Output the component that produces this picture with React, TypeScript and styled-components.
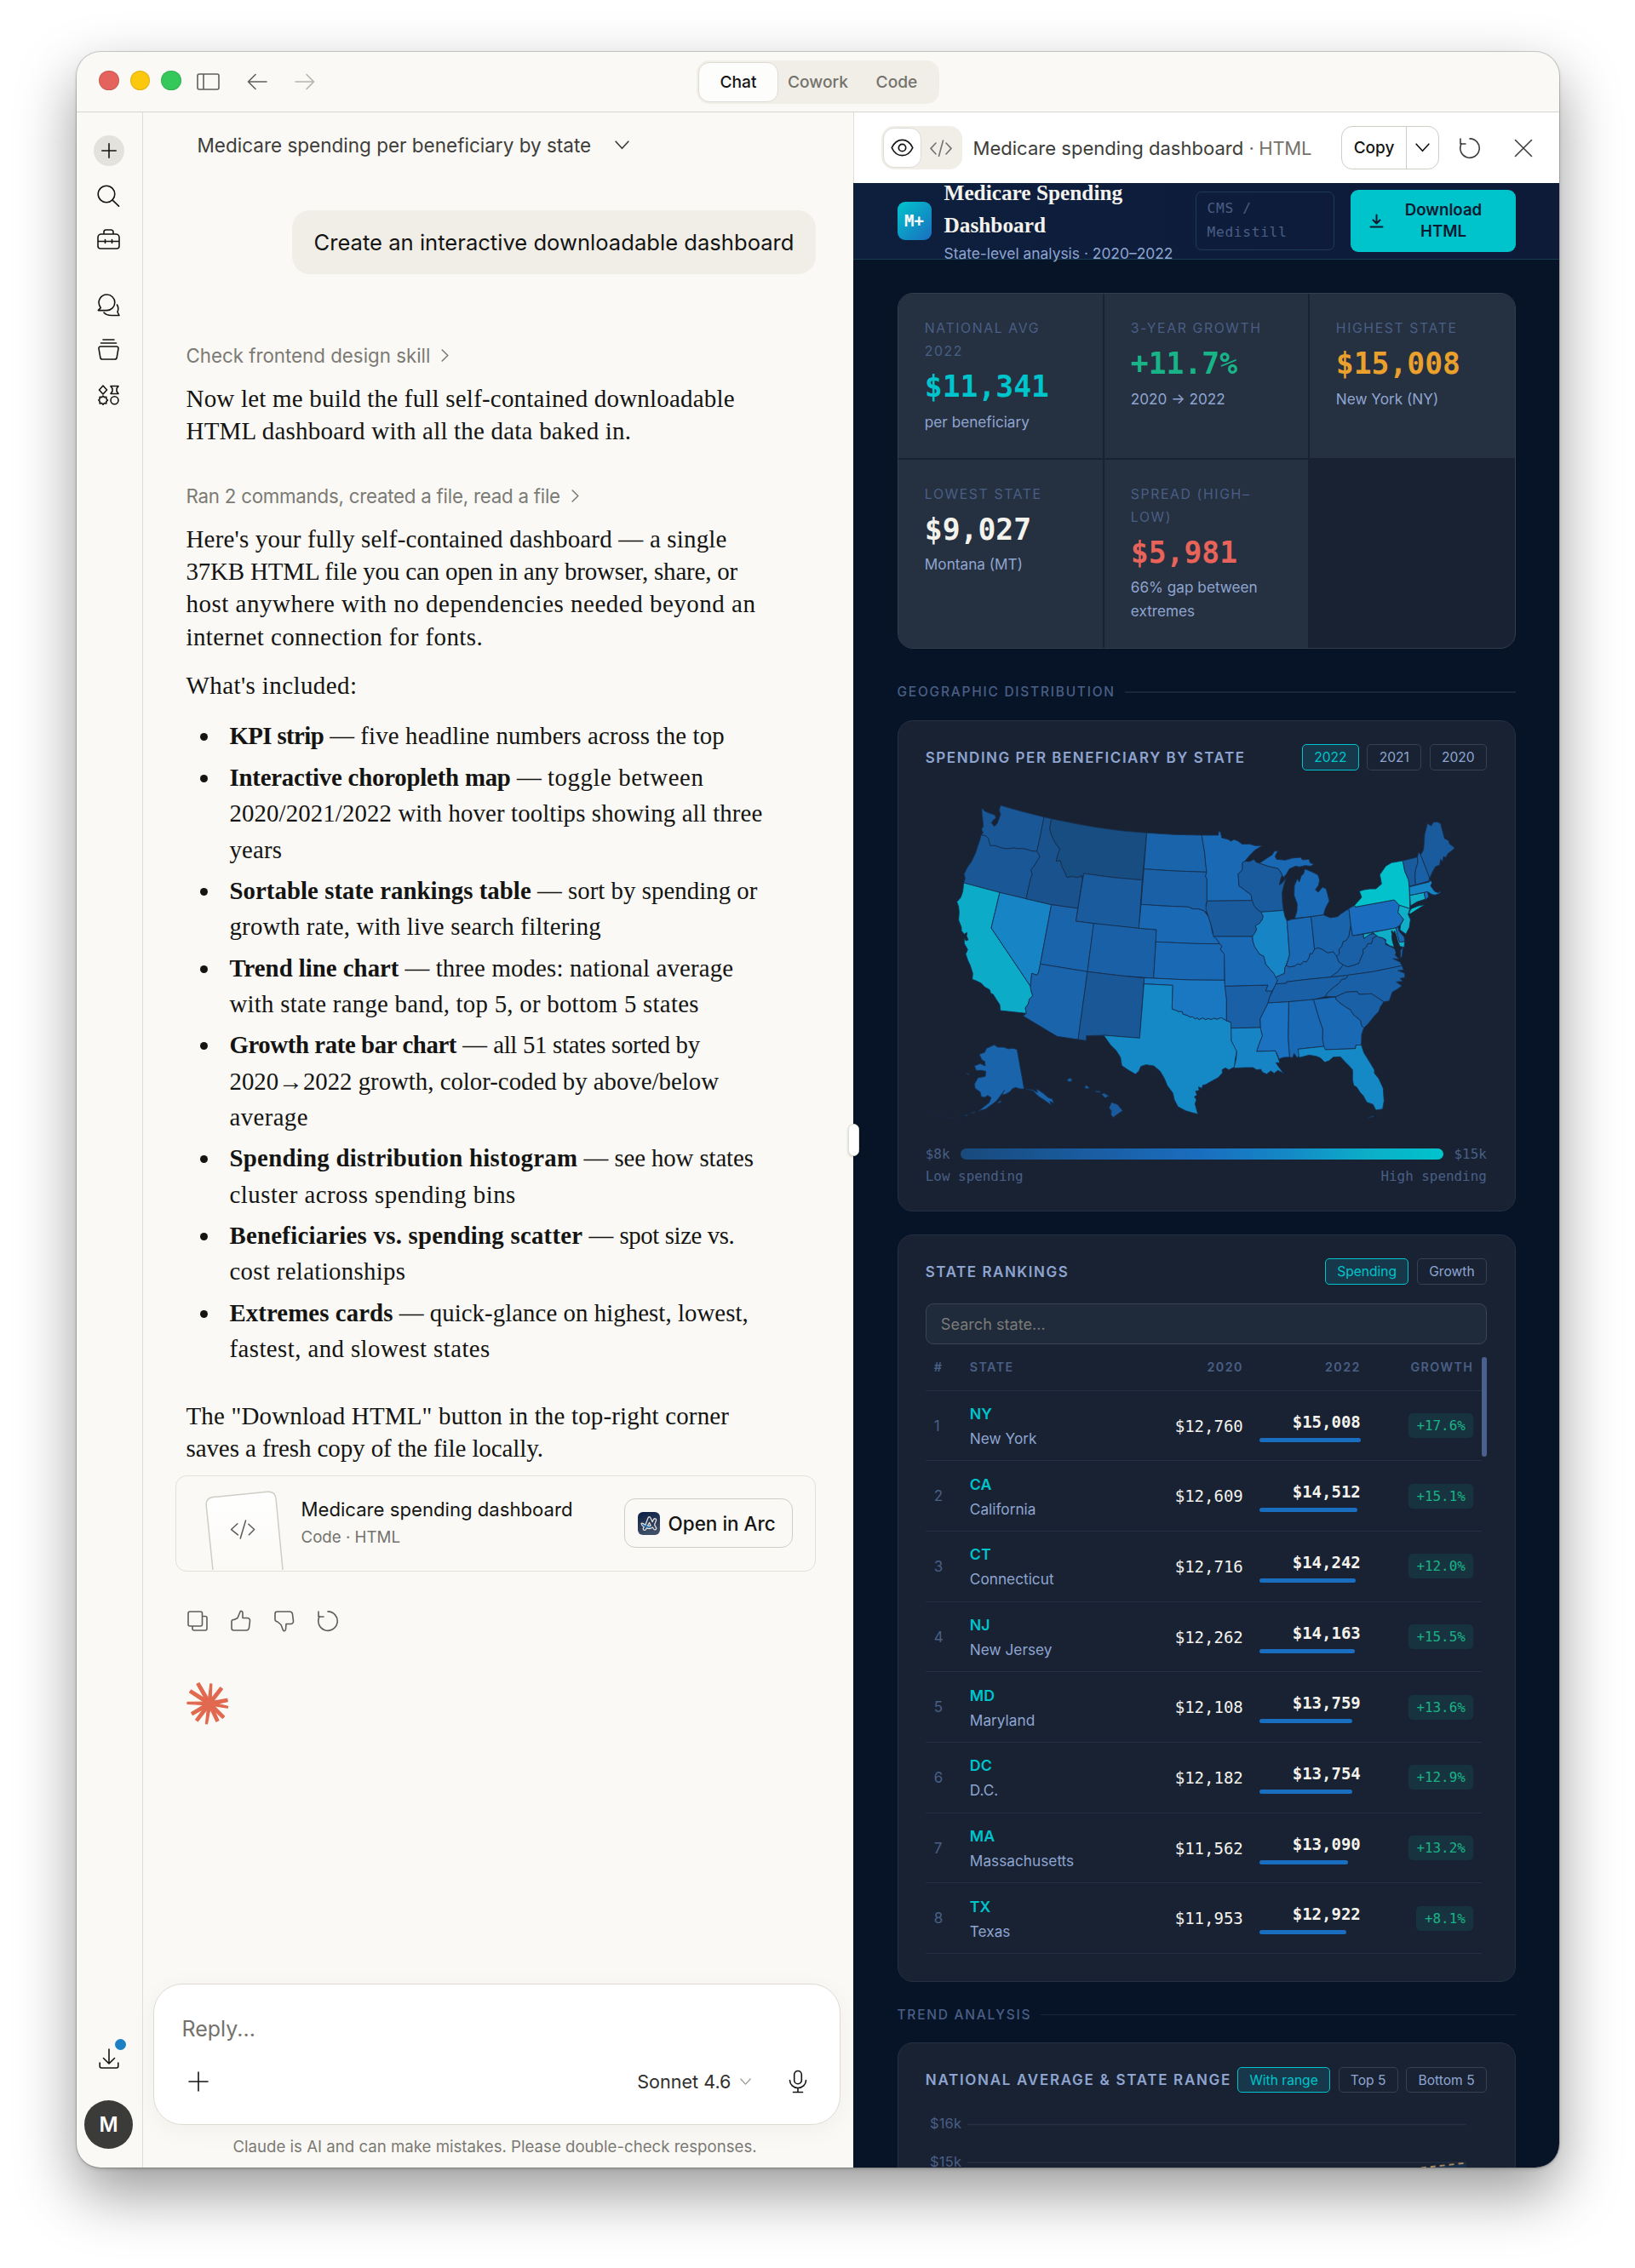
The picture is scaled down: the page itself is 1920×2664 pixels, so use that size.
import React from 'react';
import styled, { createGlobalStyle, css } from 'styled-components';

const SANS = `Inter, 'Liberation Sans', sans-serif`;
const SERIF = `'Liberation Serif', serif`;
const MONO = `'DejaVu Sans Mono', 'Liberation Mono', monospace`;

const Global = createGlobalStyle`
  *, *::before, *::after { box-sizing: border-box; }
  html, body { margin: 0; background: #fff; }
  body { font-family: ${SANS}; color: #141413; overflow: hidden; }
  svg { display: block; flex: none; }
`;

const Page = styled.div`
  width: 1920px;
  height: 2664px;
  padding: 61px 0 0 90px;
  overflow: hidden;
`;

const Window = styled.div`
  width: 1741px;
  height: 2485px;
  border-radius: 28px;
  background: #faf9f5;
  box-shadow: 0 0 0 1px rgba(0, 0, 0, 0.16), 0 2px 4px rgba(0, 0, 0, 0.15), 0 30px 70px rgba(0, 0, 0, 0.4);
  overflow: hidden;
  display: flex;
  flex-direction: column;
  white-space: nowrap;
`;

/* ---------- title bar ---------- */

const TitleBar = styled.div`
  height: 71px;
  flex: none;
  border-bottom: 1.5px solid #d6d5d0;
  display: grid;
  grid-template-columns: 728px 285px 1fr;
  align-items: center;
`;
const Controls = styled.div`
  display: flex;
  align-items: center;
  padding-left: 26px;
`;
const Light = styled.span<{ $c: string }>`
  width: 23.5px;
  height: 23.5px;
  margin: -3px 13.2px 0 0;
  border-radius: 50%;
  background: ${p => p.$c};
  border: 1px solid rgba(0, 0, 0, 0.1);
`;
const NavIcons = styled.div`
  display: flex;
  align-items: center;
  gap: 32px;
  margin-left: 5px;
`;
const Segments = styled.div`
  height: 51px;
  border-radius: 15px;
  background: #f0eee7;
  padding: 2px;
  display: flex;
  font-size: 19.2px;
  font-weight: 450;
  color: #73726c;
`;
const Segment = styled.span<{ $on?: boolean; $w: number }>`
  width: ${p => p.$w}px;
  display: flex;
  align-items: center;
  justify-content: center;
  border-radius: 13px;
  ${p => p.$on && css`
    background: #fdfdfb;
    color: #141413;
    border: 1.5px solid #dddbd5;
  `}
`;

/* ---------- body ---------- */

const Body = styled.div`
  flex: 1;
  min-height: 0;
  display: grid;
  grid-template-columns: 78px 834px 1fr;
  grid-template-rows: minmax(0, 1fr);
`;

const Rail = styled.nav`
  border-right: 1.5px solid #dfded9;
  display: flex;
  flex-direction: column;
  align-items: center;
  padding: 27px 2px 22px 0;
`;
const NewChat = styled.span`
  width: 36px;
  height: 36px;
  border-radius: 50%;
  background: #e3e2dd;
  display: grid;
  place-items: center;
`;
const RailIcon = styled.span<{ $mt: number }>`
  height: 26px;
  margin-top: ${p => p.$mt}px;
  display: grid;
  place-items: center;
`;
const DownloadIcon = styled(RailIcon)`
  position: relative;
  &::after {
    content: '';
    position: absolute;
    top: -10px;
    right: -8px;
    width: 13px;
    height: 13px;
    border-radius: 50%;
    background: #1c80c4;
  }
`;
const Avatar = styled.span`
  width: 57px;
  height: 57px;
  margin-top: 36px;
  border-radius: 50%;
  background: #3b3b3a;
  color: #fff;
  display: grid;
  place-items: center;
  font-size: 24px;
  font-weight: 600;
`;
const Grow = styled.div`
  flex: 1;
`;

/* ---------- chat ---------- */

const Chat = styled.main`
  display: flex;
  flex-direction: column;
  min-height: 0;
`;
const ChatTitle = styled.header`
  height: 77px;
  padding-left: 63.5px;
  display: flex;
  align-items: center;
  gap: 28px;
  font-size: 22.5px;
  color: #3d3d3a;
`;
const Bubble = styled.div`
  align-self: flex-end;
  width: 615px;
  height: 75px;
  margin: 38px 44.5px 76px 0;
  padding-left: 26px;
  display: flex;
  align-items: center;
  border-radius: 21px;
  background: #f0eee7;
  font-size: 25.6px;
  line-height: 38px;
`;
const Thread = styled.div`
  padding-left: 50.5px;
  display: flex;
  flex-direction: column;
`;
const Step = styled.div<{ $mt?: number; $ls?: number }>`
  margin-top: ${p => p.$mt ?? 0}px;
  height: 38px;
  display: flex;
  align-items: center;
  gap: 13px;
  font-size: 22.3px;
  letter-spacing: ${p => p.$ls ?? 0}px;
  color: #7b7a74;
`;
const Para = styled.p<{ $mt: number }>`
  margin: ${p => p.$mt}px 0 0;
  font-family: ${SERIF};
  font-size: 29px;
  line-height: 38.2px;
`;
const List = styled.ul`
  list-style: none;
  margin: 19px 0 0;
  padding: 0;
  display: flex;
  flex-direction: column;
  gap: 5.9px;
  font-family: ${SERIF};
  font-size: 28.8px;
  line-height: 42.4px;
`;
const Item = styled.li`
  display: grid;
  grid-template-columns: 51px 1fr;
  &::before {
    content: '';
    width: 9px;
    height: 9px;
    margin: 18px 0 0 16px;
    border-radius: 50%;
    background: #141413;
  }
`;
const Track = styled.span<{ $ls: number }>`
  letter-spacing: ${p => p.$ls}px;
`;
const Name = styled.b<{ $ls: number }>`
  letter-spacing: ${p => p.$ls}px;
`;
const FileCard = styled.div`
  width: 752px;
  height: 113px;
  margin: 13px 0 0 -13px;
  padding: 0 26px 0 34px;
  border: 1.5px solid #e2e0d9;
  border-radius: 13px;
  display: grid;
  grid-template-columns: 113px 1fr auto;
  align-items: center;
  overflow: hidden;
`;
const FileText = styled.div`
  display: flex;
  flex-direction: column;
`;
const FileName = styled.span`
  font-size: 22.15px;
  line-height: 34px;
`;
const FileKind = styled.span`
  font-size: 18.7px;
  line-height: 32px;
  color: #73726c;
`;
const OpenButton = styled.button`
  width: 198px;
  height: 58px;
  border: 1.5px solid #cfcdc6;
  border-radius: 13px;
  background: none;
  padding: 0 0 0 15px;
  display: flex;
  align-items: center;
  gap: 10px;
  font: 500 22.5px ${SANS};
  color: #141413;
`;
const Actions = styled.div`
  display: flex;
  gap: 25px;
  margin: 45px 0 0 0;
`;
const Burst = styled.div`
  margin: 57px 0 0 -2px;
`;
const Composer = styled.div`
  width: 807px;
  height: 166px;
  flex: none;
  margin-left: 11.5px;
  border: 1.5px solid #dddbd4;
  border-radius: 34px;
  background: #fff;
  box-shadow: 0 6px 30px rgba(0, 0, 0, 0.045);
  padding: 34px 38px 35px 33px;
  display: flex;
  flex-direction: column;
  justify-content: space-between;
`;
const Placeholder = styled.div`
  font-size: 25px;
  line-height: 36px;
  color: #73726c;
`;
const ComposerRow = styled.div`
  height: 30px;
  display: flex;
  align-items: center;
  padding-left: 7.5px;
`;
const Model = styled.span`
  margin-left: auto;
  margin-right: 44px;
  display: flex;
  align-items: center;
  gap: 10px;
  font-size: 21.6px;
  color: #2f2f2d;
`;
const Disclaimer = styled.div`
  height: 50px;
  flex: none;
  line-height: 50px;
  text-align: center;
  padding-right: 8px;
  font-size: 18.65px;
  color: #7b7a74;
`;

/* ---------- artifact pane ---------- */

const Pane = styled.section`
  position: relative;
  min-width: 0;
  background: #071427;
  display: flex;
  flex-direction: column;
`;
const Handle = styled.span`
  position: absolute;
  left: -6px;
  top: 1188px;
  width: 13px;
  height: 38px;
  border-radius: 7px;
  background: #fff;
  border: 1px solid #dedcd5;
  box-shadow: 0 1px 3px rgba(0, 0, 0, 0.2);
`;
const PaneBar = styled.header`
  height: 83px;
  flex: none;
  background: #fff;
  display: flex;
  align-items: center;
  padding: 0 31px 0 31.5px;
  border-left: 1px solid #dfded9;
`;
const ViewToggle = styled.div`
  width: 95px;
  height: 51px;
  border-radius: 15px;
  background: #f0eee7;
  padding: 2px;
  display: flex;
`;
const ToggleSide = styled.span<{ $on?: boolean }>`
  width: 46px;
  display: grid;
  place-items: center;
  border-radius: 13px;
  ${p => p.$on && css`
    background: #fff;
    border: 1.5px solid #dddbd5;
  `}
`;
const PaneTitle = styled.div`
  margin-left: 13px;
  font-size: 22.05px;
  color: #3d3d3a;
  span { color: #73726c; letter-spacing: -0.3px; }
`;
const CopyGroup = styled.div`
  width: 115px;
  height: 51px;
  margin-left: auto;
  border: 1.5px solid #cfcdc6;
  border-radius: 13px;
  display: grid;
  grid-template-columns: 75px 1fr;
  font-size: 19px;
  font-weight: 500;
`;
const CopyPart = styled.span<{ $line?: boolean }>`
  display: grid;
  place-items: center;
  ${p => p.$line && css`border-left: 1.5px solid #cfcdc6;`}
`;
const PaneIcon = styled.span<{ $ml: number }>`
  margin-left: ${p => p.$ml}px;
`;

/* ---------- dashboard ---------- */

const DashHeader = styled.header`
  height: 89.5px;
  flex: none;
  padding: 0 51px 0 51.5px;
  background: linear-gradient(90deg, #0e1f3e, #0d1a38);
  border-bottom: 1.5px solid #1b3b52;
  display: flex;
  align-items: center;
`;
const Mark = styled.span`
  width: 40px;
  height: 45px;
  border-radius: 9px;
  background: linear-gradient(135deg, #00c4cc, #1a6ebf);
  display: grid;
  place-items: center;
  font: 700 19px ${MONO};
  color: #fff;
`;
const DashTitle = styled.div`
  margin-left: 15px;
  font: 700 25.3px/38.6px ${SERIF};
  color: #f4f2ec;
`;
const DashSub = styled.div`
  font: 400 17.4px/28px ${SANS};
  color: #8fa5d0;
`;
const Source = styled.div`
  width: 163px;
  height: 69px;
  margin-left: auto;
  padding: 5px 0 0 13px;
  border: 1.5px solid #1d3c54;
  border-radius: 7px;
  font: 400 16.2px/28px ${MONO};
  letter-spacing: 0.7px;
  color: #4a5f85;
`;
const DownloadButton = styled.button`
  width: 194px;
  height: 73px;
  margin-left: 19.5px;
  border: 0;
  border-radius: 9px;
  background: #00c4cc;
  color: #0b1a30;
  font: 600 18.7px/25.5px ${SANS};
  display: grid;
  grid-template-columns: 18px 1fr;
  align-items: center;
  padding: 0 16px 0 22px;
`;
const DashBody = styled.div`
  flex: 1;
  min-height: 0;
  padding: 39.5px 51px 0 51.5px;
  overflow: hidden;
`;
const Kpis = styled.div`
  height: 417.5px;
  border: 1.5px solid #333d4c;
  border-radius: 18px;
  overflow: hidden;
  background: #182233;
  display: grid;
  grid-template-columns: 240.5px 239.5px 1fr;
  grid-template-rows: 193px 1fr;
  gap: 1.5px;
`;
const Kpi = styled.div`
  background: #253040;
  padding: 27px 0 0 31.3px;
`;
const KpiLabel = styled.div`
  font-size: 15.8px;
  line-height: 27px;
  letter-spacing: 1.6px;
  color: #4a5f85;
`;
const KpiValue = styled.div<{ $c: string }>`
  font: 700 34.7px/42px ${MONO};
  margin-top: 7px;
  color: ${p => p.$c};
`;
const KpiNote = styled.div`
  font-size: 17.2px;
  line-height: 28px;
  margin-top: 6.5px;
  color: #8fa5d0;
`;
const Section = styled.div<{ $h: number; $c: number }>`
  height: ${p => p.$h}px;
  padding-top: ${p => p.$c}px;
  display: flex;
  align-items: flex-start;
  gap: 11px;
  font-size: 15.5px;
  line-height: 20px;
  font-weight: 500;
  letter-spacing: 1.75px;
  color: #4a5f85;
  &::after {
    content: '';
    flex: 1;
    height: 1.5px;
    margin-top: 9px;
    background: #18263a;
  }
`;
const Card = styled.div<{ $h: number }>`
  height: ${p => p.$h}px;
  padding: 27.9px 33.2px 0 32.3px;
  border: 1.5px solid #253042;
  border-radius: 18px;
  background: #182233;
`;
const CardHead = styled.div`
  height: 30.5px;
  display: flex;
  align-items: center;
  justify-content: space-between;
`;
const CardTitle = styled.div<{ $ls?: number }>`
  font-size: 17px;
  font-weight: 600;
  letter-spacing: ${p => p.$ls ?? 1.52}px;
  color: #8fa5d0;
`;
const Chips = styled.div`
  display: flex;
  gap: 9.7px;
`;
const Chip = styled.span<{ $on?: boolean }>`
  height: 30.5px;
  padding: 0 13.2px;
  display: flex;
  align-items: center;
  border: 1.5px solid #37404f;
  border-radius: 5px;
  font-size: 15.6px;
  color: #8fa5d0;
  ${p => p.$on && css`
    color: #00c4cc;
    border-color: #00c4cc;
    background: #16384a;
  `}
`;
const MapBox = styled.div`
  margin: 25.5px 0 22px -0.5px;
`;
const Legend = styled.div`
  height: 26px;
  display: flex;
  align-items: center;
  justify-content: space-between;
  gap: 12.5px;
  font: 400 15.9px ${MONO};
  color: #4a5f85;
`;
const LegendBar = styled.div`
  flex: 1;
  height: 13px;
  border-radius: 7px;
  background: linear-gradient(90deg, #184a7c, #1a5fa6 30%, #1a6ebf 50%, #1489c6 68%, #0cadc8 84%, #00c4cc);
`;
const Gap = styled.div<{ $h: number }>`
  height: ${p => p.$h}px;
`;
const Search = styled.div`
  height: 47.5px;
  margin-top: 22.5px;
  padding-left: 17px;
  border: 1.5px solid #3a4551;
  border-radius: 9px;
  background: #1f2a3a;
  display: flex;
  align-items: center;
  font-size: 18.1px;
  color: #7b7b78;
`;
const TableScroll = styled.div`
  margin-top: 15.5px;
  display: grid;
  grid-template-columns: 653.5px 6px;
`;
const Thumb = styled.div`
  height: 117px;
  border-radius: 3px;
  background: #4a6190;
`;
const rowGrid = css`
  display: grid;
  grid-template-columns: 42px 201px 120px 138px 132.5px;
  padding-left: 10px;
  border-bottom: 1.5px solid #253042;
`;
const HeadRow = styled.div`
  ${rowGrid}
  height: 39.3px;
  font-size: 14.3px;
  line-height: 24.6px;
  font-weight: 600;
  letter-spacing: 1.4px;
  color: #4a5f85;
`;
const Right = styled.span`
  text-align: right;
`;
const Row = styled.div`
  ${rowGrid}
  height: 82.68px;
  align-items: center;
`;
const Rank = styled.span`
  font-size: 17px;
  color: #4a5f85;
`;
const StateCode = styled.div`
  font-size: 17.8px;
  line-height: 29px;
  padding-top: 1px;
  font-weight: 600;
  color: #00c4cc;
`;
const StateName = styled.div`
  font-size: 17.25px;
  line-height: 29px;
  color: #8fa5d0;
`;
const Amount = styled.div<{ $bold?: boolean }>`
  text-align: right;
  font: ${p => (p.$bold ? 700 : 400)} 19px/28px ${MONO};
  color: #f4f2ec;
`;
const BarCell = styled.div`
  padding-left: 19px;
`;
const Bar = styled.div`
  height: 5px;
  margin-top: 5px;
  border-radius: 3px;
  background: #1a6ebf;
`;
const Badge = styled.span`
  justify-self: end;
  height: 29px;
  padding: 0 9.5px;
  border-radius: 5px;
  background: #17333f;
  color: #19b388;
  font: 400 15.9px/29px ${MONO};
`;
const ChartBox = styled.div`
  margin-top: 21.5px;
`;

/* ---------- icons ---------- */

type IconProps = { w: number; h: number; vb?: string; c?: string; s?: number; children: React.ReactNode };
const Icon = ({ w, h, vb, c = '#141413', s = 1.6, children }: IconProps) => (
  <svg width={w} height={h} viewBox={vb ?? `0 0 ${w} ${h}`} fill="none" stroke={c} strokeWidth={s} strokeLinecap="round" strokeLinejoin="round">
    {children}
  </svg>
);
const Chevron = ({ dir, c, w }: { dir: 'down' | 'right'; c: string; w: number }) =>
  dir === 'down' ? (
    <Icon w={w} h={w * 0.62} vb="0 0 16 10" c={c}><path d="M1 1.2 8 8.8 15 1.2" /></Icon>
  ) : (
    <Icon w={9} h={15} c={c}><path d="M1.2 1 7.8 7.5 1.2 14" /></Icon>
  );
const Retry = ({ c }: { c: string }) => (
  <Icon w={26} h={26} c={c}>
    <path d="M2 2v6h6M3.200 7.700A11.200 11.200 0 1 0 13 1.900" />
  </Icon>
);
const CodeGlyph = ({ w, h, c }: { w: number; h: number; c: string }) => (
  <Icon w={w} h={h} vb="0 0 28 20" c={c}>
    <path d="M8 4 2 10.4 8 17M20 4l6 6.4L20 17M16.5 1 11.5 19.5" />
  </Icon>
);
const Paper = () => (
  <svg width="92" height="110" viewBox="0 0 92 110" fill="none">
    <defs>
      <linearGradient id="paper" x1="0" y1="0" x2="0" y2="1">
        <stop offset="0" stopColor="#fff" />
        <stop offset="1" stopColor="#faf9f5" />
      </linearGradient>
    </defs>
    <path d="M10 120 1.2 34Q.5 26 9 24.600L73 18.300Q82 17.500 83 26L92 120" fill="url(#paper)" stroke="#cfcdc6" strokeWidth="1.500" />
    <g transform="translate(30 51.500) rotate(2)" stroke="#5f5e5a" strokeWidth="1.600" strokeLinecap="round" strokeLinejoin="round">
      <path d="M8 4 1 11l8 6M21 4l7 6-6 6.500M17.500 0 12 21" />
    </g>
  </svg>
);
const ArcLogo = () => (
  <svg width="26" height="27" viewBox="0 0 26 27" fill="none">
    <defs>
      <linearGradient id="arc" x1="0" y1="0" x2="0.3" y2="1">
        <stop offset="0" stopColor="#0b1d44" />
        <stop offset="1" stopColor="#3d4e66" />
      </linearGradient>
    </defs>
    <rect width="26" height="27" rx="6" fill="url(#arc)" />
    <path d="M5 15.500c3-2 6 3 10 2.500" stroke="#1d6fb8" strokeWidth="3" />
    <path d="M4 13.500c2-1.500 3 1.500 5 1.500l3-8c.6-1.700 2.300-1.700 3 0l2.200 4.600 1.400-3c1-1.600 3.400-.8 3 1.200l-2 5.200 2 3.600c.6 2-2 3-3 1.400l-1.200-2c-2.200 1.700-5 1.700-7 .8l-1 1.800c-1.200 1.600-3.600.6-3-1.400l.8-1.600c-1.400-.8-3-3-3.200-4.100Zm7.500 2.500c1.500.7 2.600.5 3.700-.1l-1.600-3.500Z" stroke="#e3ddd6" strokeWidth="1.300" strokeLinejoin="round" />
  </svg>
);

const SPOKES = [
  [-13.5, -23.5], [1.8, -23], [14, -18], [21, -4], [21.5, 4.2], [16.400, 16.200], [9.400, 20.500], [-3.500, 23.700],
  [-15, 19.800], [-20.500, 12], [-26, -0.7], [-22.500, -14.500],
];
const Spark = () => (
  <svg width="56" height="56" viewBox="-29 -27 56 56">
    {SPOKES.map(([x, y], i) => {
      const l = Math.hypot(x, y);
      const nx = -y / l;
      const ny = x / l;
      const t = i % 3 === 1 ? 1 : 1.7;
      return (
        <path
          key={i}
          d={`M${nx * 2} ${ny * 2}L${x + nx * t} ${y + ny * t}L${x - nx * t} ${y - ny * t}L${-nx * 2} ${-ny * 2}Z`}
          fill="#e1694f"
          stroke="#e1694f"
          strokeWidth="1.200"
          strokeLinejoin="round"
        />
      );
    })}
    <circle r="5.500" fill="#e1694f" />
  </svg>
);

/* ---------- map ---------- */

const C = {
  ny: '#03c2cb', ca: '#0cacc8', hi: '#0fafc8', tx: '#1489c5', nv: '#1784c5', ok: '#1a78c3', ms: '#1a72c1', pa: '#1a6dbe',
  mn: '#1a69b5', oh: '#1a64ac', va: '#1a60a6', wi: '#1a5b9e', wa: '#195796', id: '#19528d', mt: '#184d82',
};
const WEST: [string, string][] = [
  [C.wa, '252,57 262,68 280,76 298,82 302,92 292,100 286,110 296,122 306,112 312,96 318,80 313,64 318,48 395,70 471,89 459,150 446,210 425,208 410,203 395,200 380,201 365,198 340,201 318,197 300,190 282,190 278,178 274,162 262,154 249,153 256,145 251,132 257,122 255,100 252,75'],
  [C.wa, '249,153 262,154 274,162 278,178 282,190 300,190 318,197 340,201 365,198 380,201 395,200 410,203 425,208 446,210 457,228 446,245 436,262 425,275 430,292 424,305 408,377 315,355 188,321 193,305 189,290 200,268 216,245 230,215 238,190 245,170'],
  [C.ca, '188,321 315,355 285,480 423,685 425,700 431,719 420,730 415,748 405,762 409,781 317,771 315,750 303,732 292,714 283,710 280,698 262,688 250,675 232,666 218,661 220,640 211,612 203,595 195,572 202,556 190,535 190,515 196,525 204,522 198,508 200,496 190,502 180,490 180,478 170,452 172,425 170,405 164,388 178,372 185,350'],
  [C.nv, '315,355 408,377 497,398 458,607 452,636 446,646 428,640 423,685 285,480'],
  [C.id, '471,89 497,95 491,130 497,152 510,180 527,202 520,220 514,245 528,242 535,265 545,285 552,302 570,298 590,302 603,296 606,310 590,411 497,398 408,377 424,305 430,292 425,275 436,262 446,245 457,228 446,210 459,150'],
  [C.mt, '497,95 580,112 660,126 740,137 833,145 817,311 714,302 611,288 606,303 603,296 590,302 570,298 552,302 545,285 535,265 528,242 514,245 520,220 527,202 510,180 497,152 491,130'],
  [C.wi, '611,288 714,302 817,311 805,481 694,470 583,456'],
  [C.oh, '497,398 590,411 583,456 646,464 624,634 458,607'],
  [C.va, '646,464 805,481 867,486 857,657 740,648 624,634'],
  [C.oh, '458,607 624,634 591,873 517,862 397,790 409,781 405,762 415,748 420,730 431,719 425,700 423,685 428,640 446,646 452,636'],
  [C.wa, '624,634 740,648 824,656 808,868 681,858 620,860 620,877 591,873'],
  [C.oh, '833,145 930,151 1027,153 1031,180 1037,215 1040,250 1044,283 930,279 823,272'],
  [C.va, '823,272 930,279 1044,283 1040,298 1045,308 1045,385 1041,400 1048,428 1035,420 1015,413 995,413 980,406 890,402 813,397'],
  [C.mn, '813,397 890,402 980,406 995,413 1015,413 1035,420 1050,440 1058,465 1065,500 1080,520 1090,536 1000,535 865,529 867,486 805,481'],
  [C.mn, '865,529 1000,535 1090,536 1098,545 1092,555 1106,572 1107,664 980,663 857,657'],
  [C.ok, '824,656 857,657 980,663 1107,664 1109,685 1114,730 1114,807 1095,796 1080,802 1070,798 1060,803 1050,799 1040,803 1030,797 1018,803 1010,797 1003,801 995,793 985,794 975,788 960,784 958,775 945,775 935,770 922,766 924,682 823,677'],
  [C.tx, '823,677 924,682 922,766 935,770 945,775 958,775 960,784 975,788 985,794 995,793 1003,801 1010,797 1018,803 1030,797 1040,803 1050,799 1060,803 1070,798 1080,802 1095,796 1114,807 1129,812 1131,833 1131,878 1145,900 1150,915 1145,940 1142,970 1122,980 1110,973 1098,980 1100,990 1085,1007 1065,1018 1040,1032 1030,1034 1028,1045 1015,1040 1018,1052 1005,1055 1010,1068 1001,1075 1008,1085 1003,1100 1013,1136 990,1130 970,1124 943,1110 930,1085 925,1062 905,1035 895,1010 880,985 858,966 830,962 812,968 805,985 793,995 770,982 745,965 740,935 725,912 705,892 681,858 808,868'],
  [C.oh, '296,892 308,900 330,900 345,906 362,904 376,908 401,1047 385,1047 372,1042 360,1046 352,1056 335,1066 322,1068 332,1052 318,1070 305,1088 290,1100 265,1118 240,1125 262,1108 278,1095 285,1078 272,1070 262,1077 250,1075 246,1058 228,1045 226,1030 238,1008 264,1003 266,985 250,982 232,982 226,966 246,958 264,966 262,950 252,945 243,925 262,918 268,904'],
  [C.oh, '405,1047 432,1054 452,1074 470,1085 496,1104 492,1090 506,1098 500,1082 486,1078 468,1062 444,1046 448,1060 430,1050'],
  [C.oh, '214,1133 228,1127 226,1132'],
  [C.oh, '192,1140 202,1138 198,1143'],
  [C.oh, '305,1098 320,1086 318,1096'],
  [C.oh, '194,991 204,993 208,999'],
  [C.wi, '552,1014 562,1009 571,1013 566,1022 555,1021'],
  [C.wi, '614,1038 621,1034 632,1045 618,1047'],
  [C.wi, '651,1053 670,1056 668,1060 653,1058'],
  [C.wi, '674,1066 682,1062 700,1072 686,1079'],
  [C.wi, '709,1094 730,1102 748,1124 730,1136 714,1148 707,1138 708,1124 700,1114'],
];
const EAST: [string, string][] = [
  [C.mn, '37,153 95,153 96,139 103,142 107,162 130,168 140,174 150,168 165,174 180,185 205,184 225,190 250,190 225,205 205,225 188,245 180,250 180,275 165,290 168,332 180,340 195,352 210,362 214,383 55,385 55,308 50,298 54,283 50,250 47,215 41,180'],
  [C.wi, '180,250 188,245 205,246 220,238 228,248 240,252 270,262 305,270 314,282 320,292 314,310 310,328 320,322 334,302 326,330 320,355 321,390 325,418 245,424 232,415 220,400 214,383 210,362 195,352 180,340 168,332 165,290 180,275'],
  [C.wi, '55,385 214,383 220,400 232,415 245,424 253,438 250,450 240,464 226,472 230,486 222,500 215,510 78,510 75,490 68,465 60,440 51,412'],
  [C.nv, '245,424 325,418 330,440 337,455 346,575 338,600 330,620 328,640 310,648 295,655 290,640 262,608 255,580 240,572 222,545 216,525 215,510 222,500 230,486 226,472 240,464 250,450 253,438'],
  [C.mn, '240,252 265,235 285,222 292,210 305,207 295,228 300,238 330,241 355,234 385,231 392,240 415,238 418,250 432,256 420,262 400,260 380,265 368,262 345,272 335,290 324,302 316,284 305,270 270,262'],
  [C.mn, '400,272 415,278 430,285 446,293 452,312 448,330 437,345 447,354 462,336 475,342 486,385 475,405 470,418 466,434 422,440 364,446 372,420 373,395 362,365 363,330 374,306 380,318 388,295 395,290'],
  [C.mn, '337,455 352,450 422,440 434,555 425,572 418,570 415,585 405,600 395,598 385,610 375,606 365,614 345,618 335,612 346,575'],
  [C.oh, '422,440 466,434 490,444 515,440 530,428 555,412 562,470 555,510 545,525 535,528 530,545 520,555 522,570 512,580 500,564 480,568 460,555 445,550 434,555'],
  [C.oh, '330,620 335,612 345,618 365,614 375,606 385,610 395,598 405,600 415,585 418,570 425,572 434,555 445,550 460,555 480,568 500,564 512,580 520,600 535,610 515,635 490,653 400,662 335,670 335,675 298,677 303,664 295,655 310,648 328,640'],
  [C.va, '298,677 335,675 335,670 400,662 490,653 553,646 545,658 530,662 520,675 500,690 480,708 472,722 430,732 343,740 270,744 275,725 285,705 292,690'],
  [C.va, '562,470 568,507 606,502 608,517 625,505 640,500 655,508 640,515 635,535 622,535 615,550 605,555 605,570 598,585 590,605 570,612 550,617 535,610 520,600 512,580 522,570 520,555 530,545 535,528 545,525 555,510'],
  [C.va, '490,653 515,635 535,610 550,617 570,612 590,605 598,585 605,570 605,555 615,550 622,535 635,535 640,515 655,508 660,512 672,514 685,525 684,538 700,545 715,552 724,562 718,575 732,590 710,588 735,600 742,613 640,634 553,646'],
  [C.va, '746,546 742,580 737,586 736,560'],
  [C.va, '553,646 640,634 742,613 748,628 728,630 752,640 752,655 735,658 745,668 722,670 742,684 725,696 708,706 697,737 678,740 635,712 590,714 585,704 545,706 510,722 472,722 480,708 500,690 520,675 530,662 545,658'],
  [C.va, '508,728 510,722 545,706 585,704 590,714 635,712 678,740 665,760 660,775 645,790 625,815 608,832 600,825 595,805 570,785 560,768 545,760 520,742'],
  [C.mn, '430,732 508,723 508,730 520,742 545,760 560,768 570,785 595,805 600,825 608,832 600,855 599,892 580,893 578,905 472,909 465,895 462,870 463,838 450,800'],
  [C.mn, '343,740 430,732 450,800 463,838 462,870 467,897 376,907 383,930 372,937 362,922 357,937 346,935 341,870'],
  [C.ms, '270,744 343,740 341,870 346,935 325,936 308,942 305,930 296,913 230,915 238,890 250,860 243,835 242,800 255,775'],
  [C.va, '118,685 270,681 262,702 285,700 275,725 270,744 255,775 242,800 243,831 140,833 139,812 124,807 124,730'],
  [C.mn, '78,510 215,510 216,525 222,545 240,572 255,580 262,608 290,640 303,664 298,677 285,702 262,702 270,681 118,685 116,572 102,555 108,545 100,536 90,520'],
  [C.nv, '140,833 243,831 250,860 238,890 230,915 296,913 305,935 312,955 298,955 308,970 325,992 305,982 292,992 280,984 265,995 250,988 245,978 230,980 218,972 190,972 150,974 158,940 160,915 141,878'],
  [C.tx, '376,907 467,897 472,909 578,905 580,893 599,892 608,920 630,955 645,980 645,992 660,1010 676,1045 679,1090 674,1118 650,1122 640,1102 618,1094 605,1070 595,1060 582,1040 572,1035 568,1015 568,980 555,965 540,950 525,934 500,935 485,948 470,953 455,938 440,932 415,928 380,937'],
  [C.tx, '622,1150 642,1141 640,1145'],
  [C.pa, '555,412 575,400 578,406 715,381 733,400 728,425 748,450 735,470 720,480 568,507 562,470'],
  [C.ny, '575,400 600,372 592,350 610,345 630,342 650,342 670,325 664,292 685,262 705,250 745,243 752,280 765,310 768,335 770,412 733,400 715,381 578,406'],
  [C.ny, '766,428 775,412 800,402 822,398 800,412 772,430'],
  [C.hi, '733,400 770,412 764,432 772,450 768,478 756,502 735,487 737,470 748,450 728,425'],
  [C.mn, '720,480 728,476 732,492 750,512 752,528 733,530'],
  [C.hi, '606,502 720,480 733,530 752,528 750,548 735,545 728,528 722,505 716,490 706,508 708,525 715,548 698,542 684,532 686,522 672,514 660,512 640,497 625,505 608,517'],
  [C.hi, '770,365 820,355 825,378 795,388 772,402'],
  [C.pa, '820,355 832,352 836,370 825,380'],
  [C.nv, '768,335 838,318 843,312 848,320 843,332 858,352 872,356 878,349 876,358 858,364 848,362 832,352 770,365'],
  [C.wi, '745,243 797,230 798,250 790,275 788,300 790,328 768,333 765,310 752,280'],
  [C.va, '797,230 800,213 808,222 838,300 838,314 790,328 788,300 790,275 798,250'],
  [C.wi, '808,222 818,205 822,150 832,112 845,120 852,108 865,106 878,112 892,165 906,172 910,184 928,198 915,210 905,216 896,232 888,228 886,246 878,238 875,258 860,264 848,285 840,305'],
];
const UsMap = () => (
  <svg width="660" height="390" viewBox="51 0 1980 1170" stroke="#16304f" strokeWidth="2.600" strokeLinejoin="round">
    {WEST.map(([f, p], i) => <polygon key={i} fill={f} points={p} />)}
    <g transform="translate(990 0)">
      {EAST.map(([f, p], i) => <polygon key={i} fill={f} points={p} />)}
      <path d="M706 490l8 30 4 30 10 30M712 500l14 40" stroke="#182233" strokeWidth="6" fill="none" />
    </g>
    <path d="M60 1125 90 1138 130 1148 180 1146" stroke="#14284a" fill="none" strokeDasharray="10 8" />
  </svg>
);

/* ---------- data ---------- */

const ROWS: [string, string, number, number, string][] = [
  ['NY', 'New York', 12760, 15008, '+17.6%'],
  ['CA', 'California', 12609, 14512, '+15.1%'],
  ['CT', 'Connecticut', 12716, 14242, '+12.0%'],
  ['NJ', 'New Jersey', 12262, 14163, '+15.5%'],
  ['MD', 'Maryland', 12108, 13759, '+13.6%'],
  ['DC', 'D.C.', 12182, 13754, '+12.9%'],
  ['MA', 'Massachusetts', 11562, 13090, '+13.2%'],
  ['TX', 'Texas', 11953, 12922, '+8.1%'],
];
const usd = (n: number) => '$' + n.toLocaleString('en-US');

/* A line of copy with its tracking in px. */
type Line = [string, number];

const FEATURES: { name: Line; text: Line[] }[] = [
  { name: ['KPI strip', -0.6], text: [['five headline numbers across the top', 0.17]] },
  { name: ['Interactive choropleth map', -0.2], text: [['toggle between', 0.6], ['2020/2021/2022 with hover tooltips showing all three', 0.13], ['years', 0.2]] },
  { name: ['Sortable state rankings table', 0.05], text: [['sort by spending or', 0.05]] .concat([['growth rate, with live search filtering', 0.2]]) as Line[] },
  { name: ['Trend line chart', 0], text: [['three modes: national average', 0.17], ['with state range band, top 5, or bottom 5 states', 0.27]] },
  { name: ['Growth rate bar chart', -0.4], text: [['all 51 states sorted by', -0.3], ['2020→2022 growth, color-coded by above/below', 0], ['average', 0.4]] },
  { name: ['Spending distribution histogram', 0.28], text: [['see how states', -0.1], ['cluster across spending bins', 0.5]] },
  { name: ['Beneficiaries vs. spending scatter', 0.25], text: [['spot size vs.', -0.4], ['cost relationships', 0.34]] },
  { name: ['Extremes cards', 0.1], text: [['quick-glance on highest, lowest,', 0.07], ['fastest, and slowest states', 0.44]] },
];

const Lines = ({ of }: { of: string[] }) => (
  <>
    {of.map((l, i) => (
      <React.Fragment key={i}>{i > 0 && <br />}{l}</React.Fragment>
    ))}
  </>
);
const Tracked = ({ of }: { of: Line[] }) => (
  <>
    {of.map(([l, ls], i) => (
      <React.Fragment key={i}>{i > 0 && <br />}<Track $ls={ls}>{l}</Track></React.Fragment>
    ))}
  </>
);

const KPIS: { label: string[]; value: string; note: string[]; c: string }[] = [
  { label: ['NATIONAL AVG', '2022'], value: '$11,341', note: ['per beneficiary'], c: '#00c4cc' },
  { label: ['3-YEAR GROWTH'], value: '+11.7%', note: ['2020 → 2022'], c: '#19b388' },
  { label: ['HIGHEST STATE'], value: '$15,008', note: ['New York (NY)'], c: '#eaa02c' },
  { label: ['LOWEST STATE'], value: '$9,027', note: ['Montana (MT)'], c: '#f4f2ec' },
  { label: ['SPREAD (HIGH–', 'LOW)'], value: '$5,981', note: ['66% gap between', 'extremes'], c: '#e8635a' },
];

export default function App() {
  return (
    <Page>
      <Global />
      <Window>
        <TitleBar>
          <Controls>
            <Light $c="#e5635d" />
            <Light $c="#fbc80e" />
            <Light $c="#34c759" />
            <NavIcons>
              <Icon w={27} h={20} c="#5f5e5a"><path d="M3 1h21a2 2 0 0 1 2 2v14a2 2 0 0 1-2 2H3a2 2 0 0 1-2-2V3a2 2 0 0 1 2-2ZM8 1v18" /></Icon>
              <Icon w={24} h={20} c="#5f5e5a"><path d="M23 10H1.500M10 1.500 1.500 10l8.500 8.500" /></Icon>
              <Icon w={24} h={20} c="#b5b4ae"><path d="M1 10h21.500M14 1.500l8.500 8.500-8.500 8.500" /></Icon>
            </NavIcons>
          </Controls>
          <Segments>
            <Segment $on $w={94}>Chat</Segment>
            <Segment $w={93}>Cowork</Segment>
            <Segment $w={92}>Code</Segment>
          </Segments>
        </TitleBar>

        <Body>
          <Rail>
            <NewChat><Icon w={18} h={18}><path d="M9 .8v16.400M.8 9h16.400" /></Icon></NewChat>
            <RailIcon $mt={21.500}><Icon w={27} h={26}><circle cx="11" cy="11" r="9.800" /><path d="m18.200 18.200 7.300 7" /></Icon></RailIcon>
            <RailIcon $mt={25}>
              <Icon w={27} h={24}><path d="M8 6V3.500A2.500 2.500 0 0 1 10.500 1h6A2.500 2.500 0 0 1 19 3.500V6M5 6h17a4 4 0 0 1 4 4v10a3 3 0 0 1-3 3H4a3 3 0 0 1-3-3V10a4 4 0 0 1 4-4ZM1 14.500h25M9.500 12.500v4M17.500 12.500v4" /></Icon>
            </RailIcon>
            <RailIcon $mt={51.500}>
              <Icon w={27} h={27}><path d="M11.500 1a9.300 9.300 0 1 1 0 18.600H1.300l3-3.200C-1 9.500 4 1 11.500 1ZM23.500 13c2.500 4 1 7 .5 8.500l2 4H17c-4 0-7-1-9-3.500" /></Icon>
            </RailIcon>
            <RailIcon $mt={26.500}>
              <Icon w={25} h={25}><path d="M6 1h13M3.500 5h18M3 9h19a2 2 0 0 1 2 2.300l-1.800 10.500a2.500 2.500 0 0 1-2.500 2.200H5.300a2.500 2.500 0 0 1-2.500-2.200L1 11.300A2 2 0 0 1 3 9Z" /></Icon>
            </RailIcon>
            <RailIcon $mt={27}>
              <Icon w={25} h={24} s={1.600}>
                <path d="m6 1 4.500 5L6 11 1.500 6ZM15 1.500h9l-2 3v3l2 3h-9l2-3v-3Z" />
                <circle cx="19.500" cy="18.200" r="4.500" />
                <path d="m6 13 1.500 1.600 2.300-.4v2.300L11.500 18l-1.700 1.600v2.300l-2.300-.4L6 23.200l-1.500-1.700-2.300.4v-2.300L.9 18l1.300-1.500v-2.300l2.300.4Z" />
              </Icon>
            </RailIcon>
            <Grow />
            <DownloadIcon $mt={0}>
              <Icon w={24} h={24}><path d="M12 1v17M5.500 11.500 12 18l6.500-6.500M1.200 17v4a2 2 0 0 0 2 2h17.600a2 2 0 0 0 2-2v-4" /></Icon>
            </DownloadIcon>
            <Avatar>M</Avatar>
          </Rail>

          <Chat>
            <ChatTitle>
              Medicare spending per beneficiary by state
              <Chevron dir="down" c="#3d3d3a" w={17} />
            </ChatTitle>
            <Bubble>Create an interactive downloadable dashboard</Bubble>
            <Thread>
              <Step>Check frontend design skill <Chevron dir="right" c="#7b7a74" w={9} /></Step>
              <Para $mt={13}>
                <Tracked of={[['Now let me build the full self-contained downloadable', 0.2], ['HTML dashboard with all the data baked in.', 0.2]]} />
              </Para>
              <Step $mt={38} $ls={-0.24}>Ran 2 commands, created a file, read a file <Chevron dir="right" c="#7b7a74" w={9} /></Step>
              <Para $mt={12.500}>
                <Tracked
                  of={[
                    ["Here's your fully self-contained dashboard — a single", 0.17],
                    ['37KB HTML file you can open in any browser, share, or', -0.2],
                    ['host anywhere with no dependencies needed beyond an', 0.5],
                    ['internet connection for fonts.', 0.4],
                  ]}
                />
              </Para>
              <Para $mt={19.500}><Track $ls={0.4}>What's included:</Track></Para>
              <List>
                {FEATURES.map(({ name, text }) => (
                  <Item key={name[0]}><div><Name $ls={name[1]}>{name[0]}</Name> — <Tracked of={text} /></div></Item>
                ))}
              </List>
              <Para $mt={38}>
                <Tracked of={[['The "Download HTML" button in the top-right corner', 0.15], ['saves a fresh copy of the file locally.', -0.1]]} />
              </Para>
              <FileCard>
                <Paper />
                <FileText>
                  <FileName>Medicare spending dashboard</FileName>
                  <FileKind>Code · HTML</FileKind>
                </FileText>
                <OpenButton><ArcLogo />Open in Arc</OpenButton>
              </FileCard>
              <Actions>
                <Icon w={26} h={26} c="#5f5e5a"><path d="M4 2h12.500a2 2 0 0 1 2 2v13a2 2 0 0 1-2 2H4a2 2 0 0 1-2-2V4a2 2 0 0 1 2-2ZM19 7.500h3a2 2 0 0 1 2 2V22a2 2 0 0 1-2 2H9a2 2 0 0 1-2-2v-2.500" /></Icon>
                <Icon w={26} h={26} c="#5f5e5a"><path d="M5 11.500 9 9.500l3-7.300c.6-1.200 2.800-1.200 3 1V9.500h5.500a3 3 0 0 1 3 3.300l-1 8.200a3.500 3.500 0 0 1-3.500 3H4.500A2.500 2.500 0 0 1 2 21.500v-8a2 2 0 0 1 2-2Z" /></Icon>
                <Icon w={26} h={26} c="#5f5e5a"><path d="M4.500 2H19a3.500 3.500 0 0 1 3.500 3l1 8.200a3 3 0 0 1-3 3.300H15l-.5 6.500c-.3 2-2.300 2-3 1L9 17.500l-4-3.500c-2-.5-3-1-3-2.500v-7A2.500 2.500 0 0 1 4.500 2Z" /></Icon>
                <Retry c="#5f5e5a" />
              </Actions>
              <Burst><Spark /></Burst>
            </Thread>
            <Grow />
            <Composer>
              <Placeholder>Reply...</Placeholder>
              <ComposerRow>
                <Icon w={24} h={24}><path d="M12 1v22M1 12h22" /></Icon>
                <Model>Sonnet 4.6 <Chevron dir="down" c="#9b9a94" w={13} /></Model>
                <Icon w={22} h={28}><path d="M11 1.500a4.300 4.300 0 0 1 4.300 4.300v6.700a4.300 4.300 0 0 1-8.600 0V5.800A4.300 4.300 0 0 1 11 1.500ZM1.500 12.500a9.500 9 0 0 0 19 0M11 21.500v5M5.500 26.500h11" /></Icon>
              </ComposerRow>
            </Composer>
            <Disclaimer>Claude is AI and can make mistakes. Please double-check responses.</Disclaimer>
          </Chat>

          <Pane>
            <PaneBar>
              <ViewToggle>
                <ToggleSide $on>
                  <Icon w={27} h={21} s={1.700}><path d="M1.200 10.500C4 4.500 8.500 1.300 13.500 1.300S23 4.500 25.800 10.500C23 16.500 18.500 19.700 13.500 19.700S4 16.500 1.200 10.500Z" /><circle cx="13.500" cy="10.500" r="4.200" /></Icon>
                </ToggleSide>
                <ToggleSide><CodeGlyph w={28} h={20} c="#73726c" /></ToggleSide>
              </ViewToggle>
              <PaneTitle>Medicare spending dashboard <span>· HTML</span></PaneTitle>
              <CopyGroup>
                <CopyPart>Copy</CopyPart>
                <CopyPart $line><Chevron dir="down" c="#141413" w={17} /></CopyPart>
              </CopyGroup>
              <PaneIcon $ml={22.500}><Retry c="#3d3d3a" /></PaneIcon>
              <PaneIcon $ml={39.500}><Icon w={22} h={22} c="#3d3d3a"><path d="m1.500 1.500 19 19M20.500 1.500l-19 19" /></Icon></PaneIcon>
            </PaneBar>

            <DashHeader>
              <Mark>M+</Mark>
              <DashTitle>
                Medicare Spending<br />Dashboard
                <DashSub>State-level analysis · 2020–2022</DashSub>
              </DashTitle>
              <Source>CMS /<br />Medistill</Source>
              <DownloadButton>
                <Icon w={17} h={17} c="#0b1a30" s={2}><path d="M8.500 1.500v9.500M4.500 7.500l4 4 4-4M1.500 15.500h14" /></Icon>
                <span>Download<br />HTML</span>
              </DownloadButton>
            </DashHeader>

            <DashBody>
              <Kpis>
                {KPIS.map(k => (
                  <Kpi key={k.value}>
                    <KpiLabel><Lines of={k.label} /></KpiLabel>
                    <KpiValue $c={k.c}>{k.value}</KpiValue>
                    <KpiNote><Lines of={k.note} /></KpiNote>
                  </Kpi>
                ))}
              </Kpis>

              <Section $h={84} $c={41.500}>GEOGRAPHIC DISTRIBUTION</Section>
              <Card $h={577.500}>
                <CardHead>
                  <CardTitle>SPENDING PER BENEFICIARY BY STATE</CardTitle>
                  <Chips><Chip $on>2022</Chip><Chip>2021</Chip><Chip>2020</Chip></Chips>
                </CardHead>
                <MapBox><UsMap /></MapBox>
                <Legend><span>$8k</span><LegendBar /><span>$15k</span></Legend>
                <Legend><span>Low spending</span><span>High spending</span></Legend>
              </Card>

              <Gap $h={26.500} />
              <Card $h={878}>
                <CardHead>
                  <CardTitle>STATE RANKINGS</CardTitle>
                  <Chips><Chip $on>Spending</Chip><Chip>Growth</Chip></Chips>
                </CardHead>
                <Search>Search state…</Search>
                <TableScroll>
                  <div>
                    <HeadRow><span>#</span><span>STATE</span><Right>2020</Right><Right>2022</Right><Right>GROWTH</Right></HeadRow>
                    {ROWS.map(([code, name, a, b, g], i) => (
                      <Row key={code}>
                        <Rank>{i + 1}</Rank>
                        <div><StateCode>{code}</StateCode><StateName>{name}</StateName></div>
                        <Amount>{usd(a)}</Amount>
                        <BarCell>
                          <Amount $bold>{usd(b)}</Amount>
                          <Bar style={{ width: `${(b / 15008) * 100}%` }} />
                        </BarCell>
                        <Badge>{g}</Badge>
                      </Row>
                    ))}
                  </div>
                  <Thumb />
                </TableScroll>
              </Card>

              <Section $h={71.500} $c={29}>TREND ANALYSIS</Section>
              <Card $h={520}>
                <CardHead>
                  <CardTitle $ls={1.7}>NATIONAL AVERAGE &amp; STATE RANGE</CardTitle>
                  <Chips><Chip $on>With range</Chip><Chip>Top 5</Chip><Chip>Bottom 5</Chip></Chips>
                </CardHead>
                <ChartBox>
                  <svg width="660" height="120" viewBox="0 0 660 120">
                    <g fontFamily="Inter" fontSize="16.500" fill="#4a5f85">
                      <text x="5" y="20" textLength="37">$16k</text>
                      <text x="5" y="64.500" textLength="37">$15k</text>
                    </g>
                    <path d="M49 15.500H635M49 60H635" stroke="#253042" strokeWidth="1.300" />
                    <path d="M560 69 635 61V80H560Z" fill="#18304a" />
                    <path d="M560 69 635 60.500" stroke="#a88a5c" strokeWidth="2" strokeDasharray="6 5" />
                  </svg>
                </ChartBox>
              </Card>
            </DashBody>
            <Handle />
          </Pane>
        </Body>
      </Window>
    </Page>
  );
}
